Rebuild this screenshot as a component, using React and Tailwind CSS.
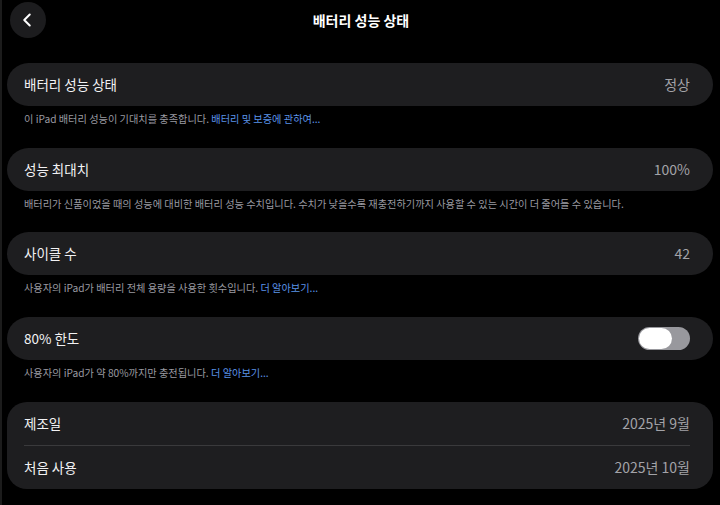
import { ChevronLeft } from "lucide-react";

const font = { fontFamily: '"Noto Sans CJK KR", "Noto Sans", sans-serif' };

function Row({ label, value, children }) {
  return (
    <div className="h-[43px] flex items-center justify-between pl-[17px] pr-[23px]">
      <span className="text-[13.5px] text-[#f2f2f4]">{label}</span>
      {children || <span className="text-[14px] text-[#a3a3a8]">{value}</span>}
    </div>
  );
}

function Footer({ text, link }) {
  return (
    <p className="px-[17px] pt-[6px] text-[10.2px] leading-[14px] text-[#9a9aa0]">
      {text}
      {link && <span className="text-[#5b93e8]"> {link}</span>}
    </p>
  );
}

function Toggle() {
  return (
    <div className="w-[52px] h-[23px] rounded-full bg-[#98989d] p-[1px] flex items-center">
      <div className="w-[33px] h-[21px] rounded-full bg-white" />
    </div>
  );
}

export default function App() {
  return (
    <div className="w-[720px] h-[505px] bg-black overflow-hidden border-l-2 border-[#1c1c1c]" style={font}>
      <div className="h-[40px] flex items-center relative">
        <button className="ml-[8px] w-[36px] h-[36px] rounded-full bg-[#1c1c1e] flex items-center justify-center text-white">
          <ChevronLeft size={22} strokeWidth={2.2} className="-ml-[2px]" />
        </button>
        <h1 className="absolute left-0 right-0 text-center text-[14px] font-semibold text-white pointer-events-none">
          배터리 성능 상태
        </h1>
      </div>

      <div className="pl-[5px] pr-[7px] pt-[23px] flex flex-col">
        <div className="rounded-[22px] bg-[#1e1e20]">
          <Row label="배터리 성능 상태" value="정상" />
        </div>
        <Footer text="이 iPad 배터리 성능이 기대치를 충족합니다." link="배터리 및 보증에 관하여..." />

        <div className="mt-[22px] rounded-[22px] bg-[#1e1e20]">
          <Row label="성능 최대치" value="100%" />
        </div>
        <Footer text="배터리가 신품이었을 때의 성능에 대비한 배터리 성능 수치입니다. 수치가 낮을수록 재충전하기까지 사용할 수 있는 시간이 더 줄어들 수 있습니다." />

        <div className="mt-[21px] rounded-[22px] bg-[#1e1e20]">
          <Row label="사이클 수" value="42" />
        </div>
        <Footer text="사용자의 iPad가 배터리 전체 용량을 사용한 횟수입니다." link="더 알아보기..." />

        <div className="mt-[22px] rounded-[22px] bg-[#1e1e20]">
          <Row label="80% 한도">
            <Toggle />
          </Row>
        </div>
        <Footer text="사용자의 iPad가 약 80%까지만 충전됩니다." link="더 알아보기..." />

        <div className="mt-[22px] rounded-[20px] bg-[#1e1e20]">
          <Row label="제조일" value="2025년 9월" />
          <div className="ml-[17px] mr-[23px] h-px bg-[#3a3a3c]" />
          <Row label="처음 사용" value="2025년 10월" />
        </div>
      </div>
    </div>
  );
}
